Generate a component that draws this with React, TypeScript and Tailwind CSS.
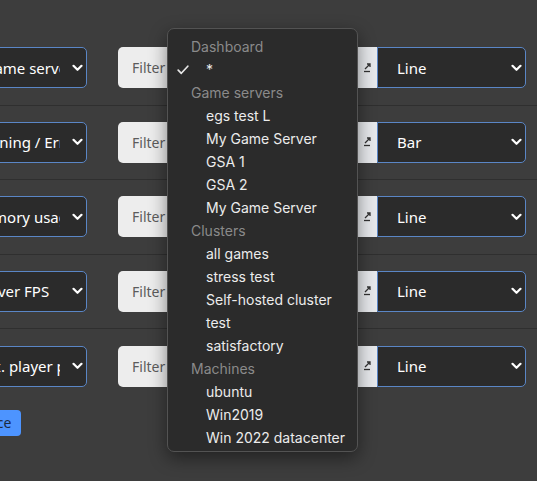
import React from 'react';

// chart rows: name select | filter + chart type select
const rows = [
  { name: 'My game servers', pad: 'pl-[29px]', type: 'Line' },
  { name: 'Warning / Errors', pad: 'pl-[40px]', type: 'Bar' },
  { name: 'Memory usage', pad: 'pl-[40px]', type: 'Line' },
  { name: 'Server FPS', pad: 'pl-[44px]', type: 'Line' },
  { name: 'Max. player peak', pad: 'pl-[40px]', type: 'Line' },
];

const menu: { label: string; header?: boolean; checked?: boolean }[] = [
  { label: 'Dashboard', header: true },
  { label: '*', checked: true },
  { label: 'Game servers', header: true },
  { label: 'egs test L' },
  { label: 'My Game Server' },
  { label: 'GSA 1' },
  { label: 'GSA 2' },
  { label: 'My Game Server' },
  { label: 'Clusters', header: true },
  { label: 'all games' },
  { label: 'stress test' },
  { label: 'Self-hosted cluster' },
  { label: 'test' },
  { label: 'satisfactory' },
  { label: 'Machines', header: true },
  { label: 'ubuntu' },
  { label: 'Win2019' },
  { label: 'Win 2022 datacenter' },
];

const Chevron = () => (
  <svg width="11" height="8" viewBox="0 0 11 8" className="shrink-0">
    <path d="M1.5 1.8 L5.5 5.8 L9.5 1.8" fill="none" stroke="#ffffff" strokeWidth="2.2" strokeLinecap="round" strokeLinejoin="round" />
  </svg>
);

const App: React.FC = () => {
  return (
    <div className="relative w-[537px] h-[481px] overflow-hidden bg-[#3d3d3d] font-['Noto_Sans',sans-serif]">
      <div className="flex flex-col pt-[31px] ml-[-70px]">
        {rows.map((row, i) => (
          <div
            key={i}
            className={`flex items-center h-[74.5px] ${i < rows.length - 1 ? 'border-b border-[#2f2f2f]' : ''}`}
          >
            {/* name select */}
            <div className={`flex items-center w-[157px] h-[41px] rounded-[5px] border border-[#5a86c6] bg-[#2b2b2b] pr-[3px] ${row.pad}`}>
              <div className="flex-1 overflow-hidden whitespace-nowrap text-[15px] text-white mr-[12px]">
                {row.name}
              </div>
              <Chevron />
            </div>

            {/* filter group */}
            <div className="flex items-center ml-[31px] h-[41px]">
              <div className="flex items-center w-[240px] h-full rounded-l-[5px] bg-[#ededed] pl-[14px] text-[14px] text-[#5c5c5c]">
                Filter
              </div>
              <div className="flex items-center justify-center w-[19px] h-full bg-[#e7e9ec]">
                <svg width="10" height="10" viewBox="0 0 10 10">
                  <path d="M2 6 L7 1 M4 1 H7 V4" fill="none" stroke="#333" strokeWidth="1.3" />
                  <path d="M1 8.5 H7" stroke="#333" strokeWidth="1.3" />
                </svg>
              </div>
              <div className="flex items-center w-[149px] h-full rounded-r-[5px] border border-[#5a86c6] bg-[#2b2b2b] pl-[19px] pr-[3px]">
                <span className="flex-1 text-[15px] text-white">{row.type}</span>
                <Chevron />
              </div>
            </div>
          </div>
        ))}

        <div className="flex mt-[6px]">
          <button className="h-[26px] px-[10px] ml-[20px] rounded-[4px] bg-[#4d94ff] text-[14px] text-[#1c2a40]">
            Replace
          </button>
        </div>
      </div>

      {/* open native dropdown */}
      <div className="absolute left-[167px] top-[28px] w-[191px] h-[424px] rounded-[7px] border border-[#535353] bg-[#2b2b2b] shadow-[0_6px_18px_rgba(0,0,0,0.45)] pt-[6px] font-['Inter',sans-serif] text-[14px]">
        {menu.map((item, i) => (
          <div key={i} className="relative h-[23px] leading-[23px] whitespace-nowrap">
            {item.checked && (
              <svg width="12" height="10" viewBox="0 0 12 10" className="absolute left-[9px] top-[7px]">
                <path d="M1.2 5.2 L4.3 8.3 L10.8 1.2" fill="none" stroke="#e6e6e6" strokeWidth="1.7" strokeLinecap="round" strokeLinejoin="round" />
              </svg>
            )}
            {item.header ? (
              <span className="pl-[23px] text-[#8a8a8a]">{item.label}</span>
            ) : (
              <span className="pl-[38px] text-[#ececec]">{item.label}</span>
            )}
          </div>
        ))}
      </div>
    </div>
  );
};

export default App;
